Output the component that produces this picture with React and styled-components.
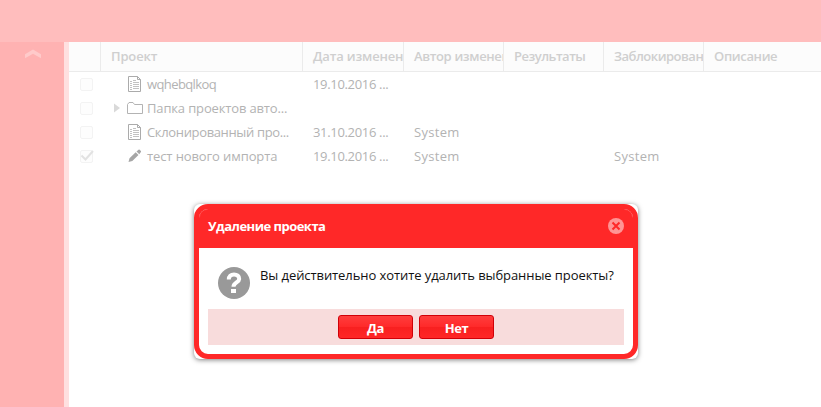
import React from "react";
import styled, { createGlobalStyle, css } from "styled-components";

const GlobalStyle = createGlobalStyle`
  * { box-sizing: border-box; }
  body { margin: 0; overflow: hidden; background: #fff; }
`;

const Page = styled.div`
  position: relative;
  display: flex;
  flex-direction: column;
  width: 821px;
  height: 407px;
  overflow: hidden;
  background: #fff;
  font-family: "Open Sans", sans-serif;
  font-size: 13px;
  color: #b3b3b3;
`;

const TopBar = styled.header`
  height: 42px;
  flex: none;
  background: #ffbdbd;
`;

const Body = styled.div`
  display: flex;
  flex: 1;
  min-height: 0;
`;

const Sidebar = styled.aside`
  display: flex;
  justify-content: center;
  align-items: flex-start;
  width: 69px;
  flex: none;
  padding: 7px 0 0 2px;
  background: #ffb2b2;
  border-right: 5px solid #ffe0e0;
`;

const Grid = styled.main`
  flex: 1;
  min-width: 0;
`;

const columns = css`
  display: grid;
  grid-template-columns: 32px 202px 101px 100px 100px 100px 1fr;
`;

const HeaderRow = styled.div`
  ${columns}
  height: 30px;
  background: #fcfcfc;
  border-bottom: 1px solid #ebebeb;
`;

const HeaderCell = styled.div`
  padding-left: 10px;
  overflow: hidden;
  white-space: nowrap;
  line-height: 29px;
  font-weight: 600;
  color: #cfcfcf;
  border-right: ${(p) => (p.$last ? "none" : "1px solid #ebebeb")};
`;

const Row = styled.div`
  ${columns}
  height: 24px;
`;

const Cell = styled.div`
  padding-left: 10px;
  overflow: hidden;
  white-space: nowrap;
  line-height: 24px;
`;

const CheckCell = styled.div`
  display: flex;
  align-items: center;
  padding-left: 11px;
`;

const NameCell = styled.div`
  display: flex;
  align-items: center;
  white-space: nowrap;
`;

const ExpanderSlot = styled.span`
  display: flex;
  width: 26px;
  padding-left: 12px;
`;

const IconSlot = styled.span`
  display: flex;
  width: 20px;
`;

const Label = styled.span`
  letter-spacing: ${(p) => p.$ls || 0}px;
`;

const Dialog = styled.section`
  position: absolute;
  left: 194px;
  top: 204px;
  width: 444px;
  height: 155px;
  background: #fff;
  border-radius: 6px;
  box-shadow: 0 1px 5px rgba(0, 0, 0, 0.5);
`;

const DialogFrame = styled.div`
  display: flex;
  flex-direction: column;
  height: 155px;
  border: 5px solid #ff2828;
  border-radius: 14px;
  background: #fff;
  overflow: hidden;
`;

const DialogHeader = styled.div`
  position: relative;
  display: flex;
  justify-content: space-between;
  align-items: center;
  height: 39px;
  flex: none;
  padding: 0 9px 5px;
  background: #ff2828;
  color: #fff;
  font-weight: 700;
`;

const CornerLines = styled.svg`
  position: absolute;
  left: 0;
  top: 0;
`;

const Message = styled.div`
  display: flex;
  height: 61px;
  padding: 19px 0 0 19px;
  color: #111;
`;

const MessageText = styled.div`
  margin-left: 10px;
  line-height: 16px;
  white-space: nowrap;
`;

const ButtonBar = styled.div`
  display: flex;
  justify-content: center;
  align-items: center;
  gap: 6px;
  height: 36px;
  margin: 0 9px;
  background: #f8dcdc;
`;

const Button = styled.button`
  width: 75px;
  height: 24px;
  padding: 2px 0 0;
  border: 1px solid #d00008;
  border-radius: 3px;
  background: linear-gradient(#ff3d3d, #ff2a2a 48%, #f82020 52%, #ff2626);
  color: #fff;
  font: inherit;
  font-weight: 700;
  line-height: 20px;
  letter-spacing: -0.5px;
`;

const ChevronIcon = () => (
  <svg width="18" height="10" viewBox="0 0 18 10">
    <path d="M1 5.2 9 .5l8 4.7v4L9 4.7 1 9.2z" fill="#ffcaca" />
  </svg>
);

const CheckBox = ({ checked }) => (
  <svg width="16" height="16" viewBox="0 0 16 16">
    <rect x=".5" y="2.5" width="12" height="12" rx="1.5" fill="#fdfdfd" stroke="#f3f3f3" />
    {checked && <path d="m1.5 7.5 4 4 7.500-8.500" fill="none" stroke="#e2e2e2" strokeWidth="2" />}
  </svg>
);

const FileIcon = () => (
  <svg width="16" height="18" viewBox="0 0 16 18">
    <path d="M1.5 1.5h9l3 3v12h-12zM10.5 1.5v3h3" fill="none" stroke="#ababab" />
    <path d="M3 6.5h2M3 8.5h2M3 10.5h2M3 12.5h2M3 14.5h2M6 5.5h3M6 7.5h6M6 9.5h6M6 11.5h6M6 13.5h6" stroke="#c2c2c2" />
  </svg>
);

const FolderIcon = () => (
  <svg width="18" height="14" viewBox="0 0 18 14">
    <path d="M.5 12.5v-9l1.500-2h4l1.500 2h8v9z" fill="none" stroke="#b3b3b3" />
  </svg>
);

const PencilIcon = () => (
  <svg width="16" height="16" viewBox="0 0 16 16">
    <path d="m1.5 14 1-3.800 6.200-6 2.800 2.800L5.300 13zM9.500 3.500l2-1.800q.6-.4 1.200 0l1.200 1.200q.4.600 0 1.200L12.300 6.200z" fill="#a6a6a6" />
  </svg>
);

const ExpandIcon = () => (
  <svg width="8" height="10" viewBox="0 0 8 10">
    <path d="M1 .5v9l6-4.500z" fill="#d9d9d9" />
  </svg>
);

const QuestionIcon = () => (
  <svg width="32" height="32" viewBox="0 0 32 32">
    <circle cx="16" cy="16" r="16" fill="#999" />
    <path d="M10.8 12.600C10.800 9.300 12.900 7.400 16 7.400s5.200 1.700 5.200 4.500c0 3.500-5.700 3.700-5.700 7.800" fill="none" stroke="#fff" strokeWidth="4" />
    <rect x="13" y="22" width="5" height="4" fill="#fff" />
  </svg>
);

const CloseIcon = () => (
  <svg width="16" height="16" viewBox="0 0 16 16">
    <circle cx="8" cy="8" r="8" fill="#ff9494" />
    <path d="m4.5 4.500 7 7m0-7-7 7" stroke="#ff2828" strokeWidth="2" />
  </svg>
);

const headers = [
  { text: "Проект", ls: -0.15 },
  { text: "Дата изменения", ls: -0.15 },
  { text: "Автор изменения", ls: -0.35 },
  { text: "Результаты", ls: -0.5 },
  { text: "Заблокировано", ls: -0.5 },
  { text: "Описание", ls: -0.35 },
];

const rows = [
  { icon: <FileIcon />, name: "wqhebqlkoq", ls: -0.6, date: "19.10.2016 ..." },
  { icon: <FolderIcon />, name: "Папка проектов авто...", ls: -0.15, folder: true },
  { icon: <FileIcon />, name: "Склонированный про...", ls: -0.35, date: "31.10.2016 ...", author: "System" },
  { icon: <PencilIcon />, name: "тест нового импорта", ls: -0.1, date: "19.10.2016 ...", author: "System", locked: "System", checked: true },
];

export default function App() {
  return (
    <Page>
      <GlobalStyle />
      <TopBar />
      <Body>
        <Sidebar><ChevronIcon /></Sidebar>
        <Grid>
          <HeaderRow>
            <HeaderCell />
            {headers.map((h, i) => (
              <HeaderCell key={h.text} $last={i === headers.length - 1}>
                <Label $ls={h.ls}>{h.text}</Label>
              </HeaderCell>
            ))}
          </HeaderRow>
          {rows.map((r) => (
            <Row key={r.name}>
              <CheckCell><CheckBox checked={r.checked} /></CheckCell>
              <NameCell>
                <ExpanderSlot>{r.folder && <ExpandIcon />}</ExpanderSlot>
                <IconSlot>{r.icon}</IconSlot>
                <Label $ls={r.ls}>{r.name}</Label>
              </NameCell>
              <Cell><Label $ls={-0.33}>{r.date}</Label></Cell>
              <Cell><Label $ls={0.3}>{r.author}</Label></Cell>
              <Cell />
              <Cell><Label $ls={0.3}>{r.locked}</Label></Cell>
              <Cell />
            </Row>
          ))}
        </Grid>
      </Body>
      <Dialog>
        <DialogFrame>
          <DialogHeader>
            <CornerLines width="434" height="12">
              <path d="M.5 8Q1 .5 8 .5M426 .5q7 0 7.500 7.500" fill="none" stroke="#ff4a4a" />
            </CornerLines>
            <Label $ls={-0.52}>Удаление проекта</Label>
            <CloseIcon />
          </DialogHeader>
          <Message>
            <QuestionIcon />
            <MessageText><Label $ls={-0.08}>Вы действительно хотите удалить выбранные проекты?</Label></MessageText>
          </Message>
          <ButtonBar>
            <Button>Да</Button>
            <Button>Нет</Button>
          </ButtonBar>
        </DialogFrame>
      </Dialog>
    </Page>
  );
}
